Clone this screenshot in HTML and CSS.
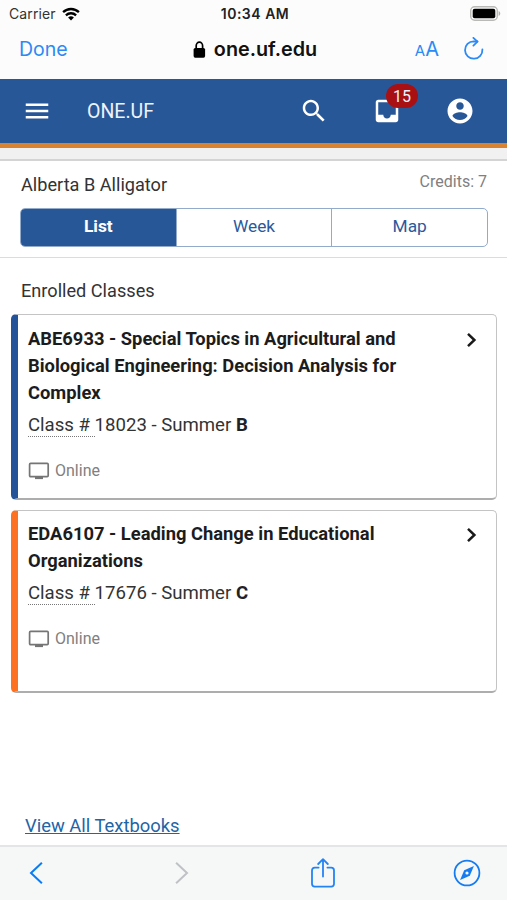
FILE: index.html
```
<!DOCTYPE html>
<html lang="en">
<head>
    <meta charset="UTF-8">
    <meta name="viewport" content="width=device-width, initial-scale=1.0">
    <title>ONE.UF</title>
    <link rel="stylesheet" href="styles.css">
</head>
<body>
    <!-- Browser top -->
    <div class="browser-top">
        <div class="status-bar">
            <div class="carrier">
                <span>Carrier</span>
                <svg width="18" height="14" viewBox="0 0 18 14">
                    <path d="M9 13.6 L11.9 10.6 A4.2 4.2 0 0 0 6.1 10.6 Z" fill="#000"/>
                    <path d="M3.9 8.3 A7.4 7.4 0 0 1 14.1 8.3 M1.1 5.2 A11.4 11.4 0 0 1 16.9 5.2" fill="none" stroke="#000" stroke-width="2.3"/>
                </svg>
            </div>
            <div class="time">10:34 AM</div>
            <svg class="battery" width="31" height="15" viewBox="0 0 31 15">
                <rect x="0.7" y="0.7" width="26.6" height="13.6" rx="4" fill="#fcfcfc" stroke="#b9b9b6" stroke-width="1.4"/>
                <rect x="2.7" y="2.7" width="22.6" height="9.6" rx="2" fill="#000"/>
                <path d="M28.6 5 C30.8 6 30.8 9 28.6 10 Z" fill="#b0b0ae"/>
            </svg>
        </div>
        <div class="url-bar">
            <span class="done">Done</span>
            <div class="url">
                <svg width="13" height="17" viewBox="0 0 13 17">
                    <path d="M3.2 8 V4.8 A3.2 3.6 0 0 1 9.6 4.8 V8" fill="none" stroke="#000" stroke-width="1.7"/>
                    <rect x="0.6" y="7" width="11.5" height="9.7" rx="1.6" fill="#000"/>
                </svg>
                <span>one.uf.edu</span>
            </div>
            <div class="url-actions">
                <span class="text-size"><small>A</small>A</span>
                <svg width="20" height="24" viewBox="0 0 20 24" fill="none" stroke="#2b8af5" stroke-width="1.8" stroke-linecap="round" stroke-linejoin="round">
                    <path d="M18.4 12.4 A8.7 8.7 0 1 1 9.7 4.3 L13.4 4.5"/>
                    <path d="M9.4 0.9 L13.5 4.6 L9.4 8.6"/>
                </svg>
            </div>
        </div>
    </div>

    <!-- App header -->
    <header class="app-header">
        <svg class="icon" viewBox="0 0 24 24"><path d="M3 18h18v-2H3v2zm0-5h18v-2H3v2zm0-7v2h18V6H3z"/></svg>
        <div class="app-name">ONE.UF</div>
        <div class="header-icons">
            <svg class="icon" viewBox="0 0 24 24"><path d="M15.5 14h-.79l-.28-.27C15.41 12.59 16 11.11 16 9.5 16 5.91 13.09 3 9.5 3S3 5.91 3 9.5 5.91 16 9.5 16c1.61 0 3.09-.59 4.23-1.57l.27.28v.79l5 4.99L20.49 19l-4.99-5zm-6 0C7.01 14 5 11.99 5 9.5S7.01 5 9.5 5 14 7.01 14 9.5 11.99 14 9.5 14z"/></svg>
            <div class="inbox">
                <svg class="icon" viewBox="0 0 24 24"><path d="M19 3H4.99c-1.11 0-1.98.89-1.98 2L3 19c0 1.1.88 2 1.99 2H19c1.1 0 2-.9 2-2V5c0-1.11-.9-2-2-2zm0 12h-4c0 1.66-1.35 3-3 3s-3-1.34-3-3H4.99V5H19v10z"/></svg>
                <span class="badge">15</span>
            </div>
            <svg class="icon" viewBox="0 0 24 24"><path d="M12 2C6.48 2 2 6.48 2 12s4.48 10 10 10 10-4.48 10-10S17.52 2 12 2zm0 3c1.66 0 3 1.34 3 3s-1.34 3-3 3-3-1.34-3-3 1.34-3 3-3zm0 14.2c-2.5 0-4.71-1.28-6-3.22.03-1.99 4-3.08 6-3.08 1.99 0 5.97 1.09 6 3.08-1.29 1.94-3.5 3.22-6 3.22z"/></svg>
        </div>
    </header>

    <section class="student">
        <div class="student-row">
            <span class="student-name">Alberta B Alligator</span>
            <span class="credits">Credits: 7</span>
        </div>
        <div class="tabs">
            <div class="tab active">List</div>
            <div class="tab">Week</div>
            <div class="tab">Map</div>
        </div>
    </section>

    <main>
        <h2>Enrolled Classes</h2>

        <div class="course blue">
            <div class="course-info">
                <h3>ABE6933 - Special Topics in Agricultural and Biological Engineering: Decision Analysis for Complex</h3>
                <p class="class-number"><span class="abbr">Class # </span>18023 - Summer <b>B</b></p>
                <p class="place">
                    <svg width="22" height="18" viewBox="0 0 22 18"><rect x="1.6" y="1.4" width="18.6" height="13.2" rx="1" fill="none" stroke="#757575" stroke-width="1.7"/><path d="M7 14.5h8v2.6H7z" fill="#757575"/></svg>
                    <span>Online</span>
                </p>
            </div>
            <svg class="chevron" width="12" height="16" viewBox="0 0 12 16"><path d="M2 1.8 L8.4 8 L2 14.2" fill="none" stroke="#1a1a1a" stroke-width="2.5"/></svg>
        </div>

        <div class="course orange">
            <div class="course-info">
                <h3>EDA6107 - Leading Change in Educational Organizations</h3>
                <p class="class-number"><span class="abbr">Class # </span>17676 - Summer <b>C</b></p>
                <p class="place">
                    <svg width="22" height="18" viewBox="0 0 22 18"><rect x="1.6" y="1.4" width="18.6" height="13.2" rx="1" fill="none" stroke="#757575" stroke-width="1.7"/><path d="M7 14.5h8v2.6H7z" fill="#757575"/></svg>
                    <span>Online</span>
                </p>
            </div>
            <svg class="chevron" width="12" height="16" viewBox="0 0 12 16"><path d="M2 1.8 L8.4 8 L2 14.2" fill="none" stroke="#1a1a1a" stroke-width="2.5"/></svg>
        </div>

        <a class="textbooks" href="#">View All Textbooks</a>
    </main>

    <!-- Browser toolbar -->
    <nav class="toolbar">
        <svg width="14" height="24" viewBox="0 0 14 24"><path d="M12.9 1.8 L2 12 L12.9 22.2" fill="none" stroke="#0a7cf5" stroke-width="2"/></svg>
        <svg class="forward" width="14" height="24" viewBox="0 0 14 24"><path d="M1.1 1.8 L12 12 L1.1 22.2" fill="none" stroke="#bfc1c4" stroke-width="2"/></svg>
        <svg class="share" width="24" height="30" viewBox="0 0 24 30" fill="none" stroke="#2483f3" stroke-width="1.8" stroke-linecap="round" stroke-linejoin="round">
            <path d="M7.6 9.6 H3.8 Q1 9.6 1 12.4 V25.8 Q1 28.6 3.8 28.6 H20.2 Q23 28.6 23 25.8 V12.4 Q23 9.6 20.2 9.6 H16.4"/>
            <path d="M12 18.6 V1.4 M7.2 6 L12 1.2 L16.8 6"/>
        </svg>
        <svg class="compass" width="28" height="28" viewBox="0 0 28 28">
            <circle cx="14" cy="14" r="12.4" fill="none" stroke="#157cf2" stroke-width="1.8"/>
            <path d="M20.9 7.1 L16.8 16.8 L7.1 20.9 L11.2 11.2 Z" fill="#157cf2"/>
            <circle cx="14" cy="14" r="1.6" fill="#f7f8f8"/>
        </svg>
    </nav>
</body>
</html>
```
FILE: styles.css
```
* {
    box-sizing: border-box;
}

body {
    display: flex;
    flex-direction: column;
    height: 900px;
    margin: 0;
    overflow: hidden;
    background-color: #fff;
    color: #333;
    font-family: Roboto, 'Liberation Sans', sans-serif;
}

svg {
    display: block;
    flex: none;
}

h2, h3, p {
    margin: 0;
}

/* Browser top */
.browser-top {
    height: 79px;
    background: #fcfcfc;
    font-family: Inter, 'Liberation Sans', sans-serif;
}

.status-bar {
    display: grid;
    grid-template-columns: 1fr auto 1fr;
    align-items: center;
    height: 27px;
    padding: 0 6px 0 9px;
}

.carrier {
    display: flex;
    align-items: center;
    gap: 6px;
    font-size: 14px;
    letter-spacing: 0.1px;
    color: #333;
}

.time {
    font-size: 14px;
    font-weight: 600;
    letter-spacing: 0.5px;
    color: #222;
}

.battery {
    justify-self: end;
}

.url-bar {
    display: grid;
    grid-template-columns: 1fr auto 1fr;
    align-items: center;
    height: 44px;
    padding: 0 23px 0 19px;
}

.done {
    font-size: 19.5px;
    color: #2b8af5;
}

.url {
    display: flex;
    align-items: center;
    gap: 8px;
    margin-left: 7px;
    font-size: 19.8px;
    font-weight: 600;
    color: #111;
}

.url-actions {
    display: flex;
    align-items: center;
    justify-content: flex-end;
    gap: 25px;
    color: #2b8af5;
}

.text-size {
    font-size: 20px;
}

.text-size small {
    font-size: 15px;
}

/* App header */
.app-header {
    display: flex;
    align-items: center;
    height: 69px;
    padding: 0 32px 0 22px;
    background: #285797;
    border-bottom: 5px solid #d9822f;
    color: #eef3fb;
}

.icon {
    width: 30px;
    height: 30px;
    fill: #fff;
}

.app-name {
    margin-left: 35px;
    font-size: 19.5px;
}

.header-icons {
    display: flex;
    gap: 43px;
    margin-left: auto;
}

.inbox {
    position: relative;
}

.badge {
    position: absolute;
    top: -12px;
    left: 14px;
    width: 32px;
    height: 24px;
    border-radius: 12px;
    background: #a81014;
    font-size: 16px;
    line-height: 25px;
    text-align: center;
}

/* Student */
.student {
    height: 110px;
    padding-top: 14px;
    border-bottom: 1px solid #dcdcdc;
    background: linear-gradient(#f1f1f1 11px, #d4d4d4 11px, #d4d4d4 13px, #fff 13px);
}

.student-row {
    display: flex;
    justify-content: space-between;
    height: 46px;
    padding: 10px 20px 0 21px;
}

.student-name {
    font-size: 18.15px;
    line-height: 25px;
}

.credits {
    font-size: 16px;
    line-height: 20px;
    color: #808080;
}

.tabs {
    display: flex;
    height: 39px;
    margin: 0 19px 0 20px;
    border: 1px solid #93abcb;
    border-radius: 5px;
    overflow: hidden;
}

.tab {
    flex: 1;
    border-left: 1px solid #93abcb;
    font-size: 17.3px;
    line-height: 35px;
    text-align: center;
    color: #2b5a9c;
}

.tab.active {
    border-left: 0;
    background: #285797;
    color: #fff;
    font-weight: 700;
}

/* Classes */
main {
    flex: 1;
    padding: 21px 10px 0 11px;
}

h2 {
    height: 35px;
    padding-left: 10px;
    font-size: 18.15px;
    font-weight: 400;
    line-height: 24px;
}

.course {
    display: flex;
    justify-content: space-between;
    height: 186px;
    margin-bottom: 10px;
    padding: 10px 18px 0 10px;
    border: 1px solid #c4c4c4;
    border-bottom: 2px solid #adadad;
    border-left: 7px solid #24539a;
    border-radius: 5px;
}

.course.orange {
    height: 183px;
    padding-top: 9px;
    border-left-color: #fd7222;
}

.course-info {
    width: 390px;
}

h3 {
    font-size: 18.35px;
    font-weight: 700;
    line-height: 27px;
    color: #1c1c1c;
}

.class-number {
    margin-top: 6px;
    font-size: 18.6px;
    line-height: 27px;
}

.class-number b {
    color: #222;
}

.abbr {
    border-bottom: 1px dotted #777;
    white-space: pre;
}

.place {
    display: flex;
    align-items: center;
    gap: 5px;
    margin-top: 21px;
    font-size: 16px;
    line-height: 22px;
    color: #808080;
}

.chevron {
    margin-top: 7px;
}

.textbooks {
    display: inline-block;
    margin: 111px 0 0 14px;
    font-size: 18.4px;
    line-height: 24px;
    color: #2364a5;
}

/* Browser toolbar */
.toolbar {
    display: flex;
    align-items: center;
    height: 55px;
    padding: 0 26px 2px 29px;
    border-top: 2px solid #e4e5e6;
    background: #f6f8f8;
}

.forward {
    margin-left: 132px;
}

.share {
    margin-left: 122px;
}

.compass {
    margin-left: auto;
}
```
